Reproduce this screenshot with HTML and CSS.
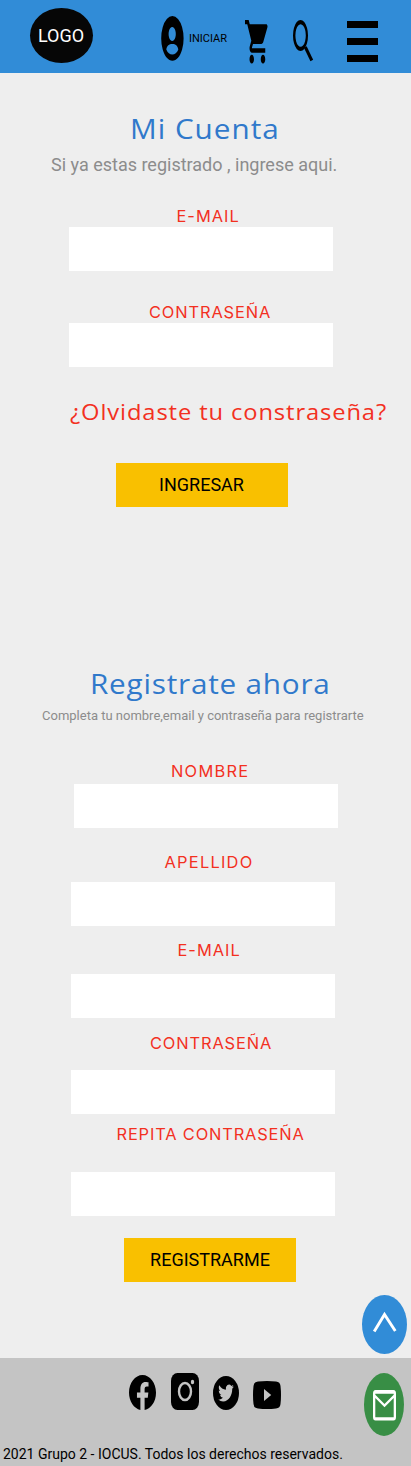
FILE: index.html
```html
<!DOCTYPE html>
<html lang="es">
<head>
<meta charset="utf-8">
<title>Mi Cuenta</title>
<link rel="stylesheet" href="styles.css">
</head>
<body>
<div class="page">
  <header class="header">
    <div class="logo">LOGO</div>
    <a class="login">
      <svg width="23" height="45" viewBox="0 0 23 45"><path fill-rule="evenodd" d="M11.4 0a11.2 22.4 0 1 0 .01 0ZM11.2 11a3.600 7 0 1 1-.01 0ZM5.300 33.500C6 29.500 8 28 11.300 28s5.300 1.500 6 5.500C16 37 13.800 38.500 11.300 38.500S6.600 37 5.300 33.500Z"/></svg>
      <span>INICIAR</span>
    </a>
    <svg class="cart" width="22.500" height="43.500" viewBox="1 2 20 20" preserveAspectRatio="none"><path d="M7 18c-1.100 0-1.990.9-1.990 2S5.900 22 7 22s2-.9 2-2-.9-2-2-2zM1 2v2h2l3.600 7.590-1.350 2.450c-.16.28-.25.61-.25.96 0 1.100.9 2 2 2h12v-2H7.420c-.14 0-.25-.11-.25-.25l.03-.12.9-1.630h7.450c.75 0 1.410-.41 1.750-1.030l3.580-6.490A1 1 0 0 0 20 4H5.210l-.94-2H1zm16 16c-1.100 0-1.990.9-1.990 2s.89 2 1.990 2 2-.9 2-2-.9-2-2-2z"/></svg>
    <svg class="search" width="21" height="43" viewBox="0 0 21 43"><path fill-rule="evenodd" d="M7.500 0a7.500 15.500 0 1 0 .01 0ZM7.600 4.200a5.200 11.300 0 1 1-.01 0Z"/><path d="m12.300 27 6.500 13.500" stroke="#000" stroke-width="3"/></svg>
    <div class="menu"><i></i><i></i><i></i></div>
  </header>

  <main class="main">
    <section class="access">
      <h1 class="title title-account">Mi Cuenta</h1>
      <p class="intro">Si ya estas registrado , ingrese aqui.</p>
      <label class="label label-mail">E-MAIL</label>
      <div class="field"></div>
      <label class="label label-pass">CONTRASEÑA</label>
      <div class="field"></div>
      <a class="forgot">¿Olvidaste tu constraseña?</a>
      <div class="button">INGRESAR</div>
    </section>

    <section class="register">
      <h2 class="title title-register">Registrate ahora</h2>
      <p class="hint">Completa tu nombre,email y contraseña para registrarte</p>
      <label class="label label-name">NOMBRE</label>
      <div class="field field-name"></div>
      <label class="label label-surname">APELLIDO</label>
      <div class="field field-surname"></div>
      <label class="label label-newmail">E-MAIL</label>
      <div class="field field-newmail"></div>
      <label class="label label-newpass">CONTRASEÑA</label>
      <div class="field field-newpass"></div>
      <label class="label label-repeat">REPITA CONTRASEÑA</label>
      <div class="field field-repeat"></div>
      <div class="button button-register">REGISTRARME</div>
    </section>
  </main>

  <footer class="footer">
    <div class="social">
      <svg class="facebook" width="27" height="35" viewBox="2 2.040 20 19.920" preserveAspectRatio="none"><path d="M12 2.040C6.500 2.040 2 6.530 2 12.060C2 17.060 5.660 21.210 10.440 21.960V14.960H7.900V12.060H10.440V9.850C10.440 7.340 11.930 5.960 14.220 5.960C15.310 5.960 16.450 6.150 16.450 6.150V8.620H15.190C13.950 8.620 13.560 9.390 13.560 10.180V12.060H16.340L15.890 14.960H13.560V21.960A10 10 0 0 0 22 12.060C22 6.530 17.500 2.040 12 2.040Z"/></svg>
      <svg class="instagram" width="28" height="37" viewBox="0 0 28 37"><rect width="28" height="37" rx="6.500" ry="8"/><ellipse cx="14" cy="18.500" rx="6" ry="8.500" fill="none" stroke="#c4c4c4" stroke-width="2.400"/><ellipse cx="21.500" cy="9" rx="1.700" ry="2.300" fill="#c4c4c4"/></svg>
      <svg class="twitter" width="26" height="34" viewBox="0 0 26 34"><ellipse cx="13" cy="17" rx="13" ry="17"/><g transform="translate(5.200 6.600) scale(.65 .87)"><path fill="#c4c4c4" d="M23.953 4.570a10 10 0 01-2.825.775 4.958 4.958 0 002.163-2.723c-.951.555-2.005.959-3.127 1.184a4.920 4.920 0 00-8.384 4.482C7.690 8.095 4.067 6.130 1.640 3.162a4.822 4.822 0 00-.666 2.475c0 1.710.87 3.213 2.188 4.096a4.904 4.904 0 01-2.228-.616v.06a4.923 4.923 0 003.946 4.827 4.996 4.996 0 01-2.212.085 4.936 4.936 0 004.604 3.417 9.867 9.867 0 01-6.102 2.105c-.39 0-.779-.023-1.170-.067a13.995 13.995 0 007.557 2.209c9.053 0 13.998-7.496 13.998-13.985 0-.21 0-.42-.015-.63A9.935 9.935 0 0024 4.590z"/></g></svg>
      <svg class="youtube" width="28" height="28" viewBox="0 0 28 28"><path d="M5 .5Q14-.5 23 .5q4.200.3 4.500 4.500 1 9 0 18-.3 4.200-4.500 4.500-9 1-18 0Q.8 27.200.5 23q-1-9 0-18Q.8.8 5 .5Z"/><path fill="#c4c4c4" d="m11 8 7.200 6L11 20Z"/></svg>
    </div>
    <p class="legal">2021 Grupo 2 - IOCUS. Todos los derechos reservados.</p>
  </footer>

  <a class="float float-top"><svg width="45" height="59" viewBox="0 0 45 59"><ellipse cx="22.500" cy="29.500" rx="22.500" ry="29.500" fill="#318cd7"/><path d="m12.200 36.500 10.300-17 10.800 16.500" fill="none" stroke="#fff" stroke-width="2.900"/></svg></a>
  <a class="float float-mail"><svg width="40" height="63" viewBox="0 0 40 63"><ellipse cx="20" cy="31.500" rx="20" ry="31.500" fill="#388e45"/><path fill="#fff" fill-rule="evenodd" d="M11.500 17h18q2.500 0 2.500 3.500v23.500q0 3.500-2.500 3.500h-18Q9 47.500 9 44V20.500Q9 17 11.500 17ZM11.300 25v19.200h18.400V25l-9.200 9.200ZM11.300 20.700v1.100l9.200 9.200 9.200-9.200v-1.100Z"/></svg></a>
</div>
</body>
</html>
```

FILE: styles.css
```css
* {
  box-sizing: border-box;
}

body {
  margin: 0;
  font-family: Roboto, sans-serif;
  color: #000;
}

h1, h2, p {
  margin: 0;
}

svg {
  display: block;
  flex: none;
}

.page {
  position: relative;
  display: flex;
  flex-direction: column;
  width: 411px;
  height: 1466px;
  background: #eee;
  white-space: nowrap;
}

/* Header */
.header {
  display: flex;
  align-items: flex-start;
  height: 73px;
  padding-left: 30px;
  background: #318cd7;
}

.logo {
  width: 63px;
  height: 55px;
  margin-top: 8px;
  border-radius: 50%;
  background: #060606;
  color: #fff;
  font-size: 18px;
  line-height: 56px;
  text-align: center;
  text-indent: -1px;
}

.login {
  display: flex;
  align-items: center;
  gap: 5px;
  width: 84px;
  margin: 16px 0 0 68px;
  font-size: 11px;
}

.cart {
  margin-top: 20px;
}

.search {
  margin: 20px 0 0 25.5px;
}

.menu {
  display: grid;
  gap: 10px;
  width: 31px;
  margin: 21px 0 0 33px;
}

.menu i {
  height: 7px;
  background: #000;
}

/* Forms */
.main {
  height: 1285px;
}

.access {
  height: 583px;
  padding-top: 36px;
}

.title {
  width: max-content;
  font-family: "Open Sans", sans-serif;
  font-size: 28px;
  font-weight: 400;
  line-height: 38px;
  color: #3079cb;
  transform: scaleX(1.06);
  transform-origin: left;
}

.title-account {
  margin-left: 130px;
  letter-spacing: 0.95px;
}

.title-register {
  margin-left: 90px;
  letter-spacing: 0.74px;
}

.intro {
  margin: 7px 0 0 51px;
  font-size: 18px;
  line-height: 22px;
  color: #8c8c8c;
}

.hint {
  margin: 6px 0 0 42px;
  font-size: 13px;
  line-height: 16px;
  color: #8c8c8c;
}

.label {
  display: block;
  height: 22px;
  font-family: Inter, sans-serif;
  font-size: 16.4px;
  line-height: 22px;
  letter-spacing: 0.88px;
  color: #f3301f;
}

.label-mail {
  margin: 29px 0 0 176.5px;
  letter-spacing: 1px;
}

.label-pass {
  margin: 30px 0 0 149px;
}

.field {
  width: 264px;
  height: 44px;
  margin-left: 69px;
  background: #fff;
}

.forgot {
  display: block;
  width: max-content;
  margin: 30px 0 0 70px;
  font-family: "Open Sans", sans-serif;
  font-size: 22.4px;
  line-height: 30px;
  letter-spacing: 0.83px;
  color: #f3301f;
  transform: scaleX(1.06);
  transform-origin: left;
}

.button {
  width: 172px;
  height: 44px;
  margin: 36px 0 0 116px;
  background: #f9c000;
  font-size: 18px;
  line-height: 44px;
  text-align: center;
  text-indent: -1px;
}

.register {
  padding-top: 8px;
}

.register .field {
  margin-left: 71px;
}

.label-name {
  margin: 36px 0 0 171px;
  letter-spacing: 1.25px;
}

.register .field-name {
  margin: 2px 0 0 74px;
}

.label-surname {
  margin: 23px 0 0 164.5px;
  letter-spacing: 1.25px;
}

.field-surname {
  margin-top: 9px;
}

.label-newmail {
  margin: 13px 0 0 177.5px;
  letter-spacing: 1px;
}

.field-newmail {
  margin-top: 13px;
}

.label-newpass {
  margin: 14px 0 0 150px;
}

.field-newpass {
  margin-top: 16px;
}

.label-repeat {
  margin: 9px 0 0 116.5px;
  letter-spacing: 0.85px;
}

.field-repeat {
  margin-top: 27px;
}

.button-register {
  margin: 22px 0 0 124px;
  text-indent: 0;
}

/* Footer */
.footer {
  height: 108px;
  background: #c4c4c4;
}

.social {
  display: flex;
  align-items: flex-start;
  height: 86px;
  padding: 15px 0 0 129px;
}

.facebook {
  margin-top: 2px;
}

.instagram {
  margin-left: 15px;
}

.twitter {
  margin: 3px 0 0 14px;
}

.youtube {
  margin: 8px 0 0 14px;
}

.legal {
  padding-left: 3px;
  font-size: 14px;
  line-height: 20px;
}

/* Floating shortcuts */
.float {
  position: absolute;
}

.float-top {
  left: 362px;
  top: 1295px;
}

.float-mail {
  left: 364px;
  top: 1373px;
}
```
